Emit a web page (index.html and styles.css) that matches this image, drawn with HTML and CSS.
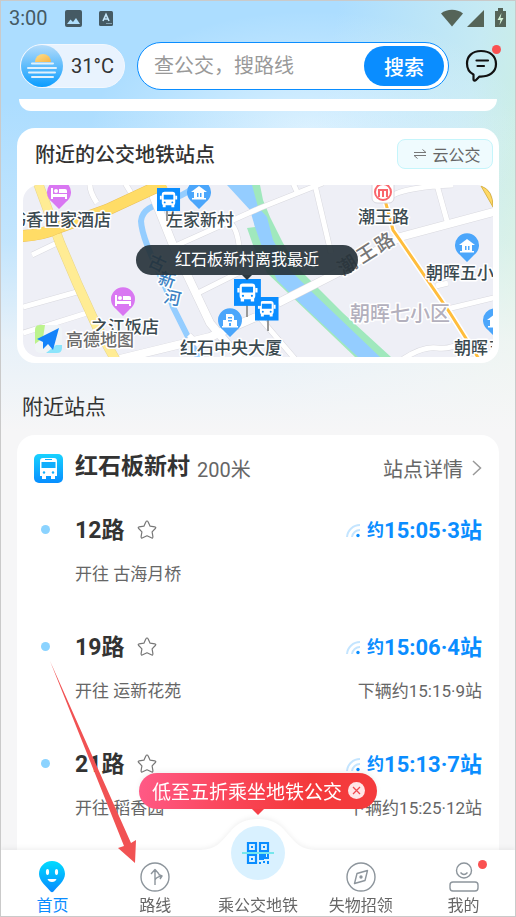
FILE: index.html
```
<!DOCTYPE html>
<html lang="zh-CN">
<head>
    <meta charset="UTF-8">
    <meta name="viewport" content="width=device-width, initial-scale=1.0">
    <title>附近站点</title>
    <link rel="stylesheet" href="styles.css">
</head>
<body>
    <div class="app">
        <div class="status-bar">
            <span class="clock">3:00</span>
            <svg class="status-image" width="17" height="17" viewBox="0 0 17 17"><rect width="17" height="17" rx="2" fill="#455a64"/><path d="M2 14l3.500-4.500 2.500 2.500 3-4 4 6z" fill="#afdefc"/></svg>
            <svg width="14" height="15" viewBox="0 0 14 15"><rect width="14" height="15" rx="1.500" fill="#455a64"/><path d="M4 10L7 3.500 10 10M5 8h4" fill="none" stroke="#c4e6fb" stroke-width="1.600"/><path d="M7.500 12.500h1M9.500 12.500h1M11.500 12.500h1" stroke="#c4e6fb"/></svg>
            <svg class="status-right" width="66" height="20" viewBox="0 0 66 20"><path d="M0 5.500C6 .5 16 .5 22 5.500L11 18.500z" fill="#556458"/><path d="M43 2v17H26z" fill="#556458"/><path d="M54 3h3V0h5v3h3v16H54z" fill="#556458"/><path d="M60.500 5l-4 7h3l-1 5 4-7h-3z" fill="#d3f2d8"/></svg>
        </div>

        <header class="header">
            <div class="weather">
                <svg width="42" height="42" viewBox="0 0 42 42">
                    <defs>
                        <linearGradient id="sky" x1="0" y1="0" x2="0" y2="1"><stop offset="0" stop-color="#b4dcfa"/><stop offset="1" stop-color="#0a9dff"/></linearGradient>
                        <linearGradient id="sun" x1="0" y1="0" x2="1" y2="1"><stop offset="0" stop-color="#ffe08a"/><stop offset="1" stop-color="#f5b54a"/></linearGradient>
                    </defs>
                    <circle cx="21" cy="21" r="21" fill="url(#sky)"/>
                    <path d="M14 17a8 8 0 0 1 16 0z" fill="url(#sun)"/>
                    <path d="M11 18.500h21M7 23h28M8 27.500h26M11 32h21" stroke="#e3f1fb" stroke-width="2" stroke-linecap="round"/>
                </svg>
                <span>31°C</span>
            </div>
            <form class="search">
                <input type="text" aria-label="搜索" placeholder="查公交，搜路线">
                <button type="button">搜索</button>
            </form>
            <button class="message" type="button" aria-label="消息">
                <svg width="34" height="34" viewBox="0 0 34 34"><path d="M16 2C7 2 2 7.500 2 14.500c0 5.500 2.500 9 6.500 11v5c0 1.500 1.500 1.500 2.500.5l3.500-3.500c10 .5 16.500-4.500 16.500-12.500S25 2 16 2z" fill="none" stroke="#111" stroke-width="2.200" stroke-linejoin="round"/><path d="M11.500 11.500h11.500M12.500 17h6.500" stroke="#111" stroke-width="2.200" stroke-linecap="round"/></svg>
                <i class="dot"></i>
            </button>
        </header>

        <main class="content">
            <div class="card card-end"></div>

            <section class="card map-card">
                <div class="map-head">
                    <h2>附近的公交地铁站点</h2>
                    <button class="cloud-btn" type="button">
                        <svg width="14" height="10" viewBox="0 0 14 10"><path d="M1 3.500h12L9.500 .5M13 6.500H1L4.500 9.500" fill="none" stroke="#777"/></svg>
                        云公交
                    </button>
                </div>
                <div class="map">
                    <svg class="map-img" viewBox="0 0 470 172" preserveAspectRatio="xMidYMid slice">
                        <defs>
                            <g id="pin"><path d="M0 16L-7 9A12 12 0 1 1 7 9z"/></g>
                            <g id="house" fill="#fff"><path d="M-8-1L0-7 8-1z"/><path d="M-5-1H5V5H-5z"/><path d="M-7 5H7v1.500H-7z"/><path d="M-2 0h1.500v4H-2zM1 0h1.500v4H1z" fill="#4ba6fb"/></g>
                            <g id="tower" fill="#fff"><path d="M-4-7H2l2 2V5H-4zM-7-1h3v6h-3zM4-1h3v6H4zM-8 5H8v1.500H-8z"/><path d="M-2-4h4v1.500h-4zM-2-1h4V.5h-4zM-1 2H1v3h-2z" fill="#4ba6fb"/></g>
                            <g id="hotel" fill="#fff"><path d="M-8-5h2v6H8V6H6V4H-6v2h-2z"/><circle cx="-3" cy="-2" r="2"/><path d="M0-4h6q2 0 2 2v2H0z"/></g>
                            <g id="bus"><rect width="24" height="24" fill="#0a8dff"/><rect x="5" y="4" width="14" height="14" rx="3" fill="#fff"/><path d="M7 7h10v5H7z" fill="#0a8dff"/><path d="M6 17h3v3H6zM15 17h3v3h-3zM3 8h2v4H3zM19 8h2v4h-2z" fill="#fff"/><circle cx="8" cy="15" r="1" fill="#0a8dff"/><circle cx="16" cy="15" r="1" fill="#0a8dff"/></g>
                        </defs>
                        <rect width="470" height="172" fill="#eeeff6"/>
                        <path d="M225 0H237L240 15 247 32 260 58 277 85 320 128 368 172H332L264 107 244 88 230 60 224 43 232 42z" fill="#a0e8bd"/>
                        <path d="M204 0H229L235 22 244 32 250 55 267 85 290 108 357 172H335L277 118 254 95 239 62 232 42 227 25z" fill="#94cdff"/>
                        <path d="M170 3C150 20 120 16 118 36 119 58 142 96 150 122L176 174" fill="none" stroke="#94cdff" stroke-width="6"/>
                        <!-- streets: grey edge first, white on top -->
                        <g class="street-edge">
                            <path d="M67 -2Q66 6 74 18M102 -2L108 8M270 -2L275 9M292 0L308 68M207 38Q217 45 217 80M414 0L424 36M370 10Q385 2 430 0"/>
                            <path d="M9 70L34 58M0 122L54 107M0 148L64 128M175 108L217 87M380 174Q400 161 414 163T440 156M420 125L474 112M413 101L425 98"/>
                        </g>
                        <g class="street-edge wide">
                            <path d="M126 0L150 60 187 138 217 174M255 118L320 85 377 52 474 26M97 174L187 152 233 132"/>
                        </g>
                        <g class="street-edge">
                            <path d="M150 62L237 23 300 -2M237 133L272 174M166 150L176 160"/>
                        </g>
                        <g class="street">
                            <path d="M67 -2Q66 6 74 18M102 -2L108 8M270 -2L275 9M292 0L308 68M207 38Q217 45 217 80M414 0L424 36M370 10Q385 2 430 0"/>
                            <path d="M9 70L34 58M0 122L54 107M0 148L64 128M175 108L217 87M380 174Q400 161 414 163T440 156M420 125L474 112M413 101L425 98"/>
                            <path d="M150 62L237 23 300 -2M237 133L272 174M166 150L176 160"/>
                        </g>
                        <g class="street wide">
                            <path d="M126 0L150 60 187 138 217 174M255 118L320 85 377 52 474 26M97 174L187 152 233 132"/>
                        </g>
                        <path d="M15 -2L37 58 54 98 74 142 92 174" fill="none" stroke="#e8d58b" stroke-width="10"/>
                        <path d="M15 -2L37 58 54 98 74 142 92 174" fill="none" stroke="#ffec94" stroke-width="9"/>
                        <path d="M-2 51Q20 50 34 43L84 25 142 -2" fill="none" stroke="#eac05b" stroke-width="12"/>
                        <path d="M-2 51Q20 50 34 43L84 25 142 -2" fill="none" stroke="#ffdc66" stroke-width="11"/>
                        <path d="M458 1Q470 5 470 22z" fill="#ffd964" stroke="#d9b44a"/>
                        <path d="M362 15L370 45 377 55 427 128 456 174" fill="none" stroke="#fff" stroke-width="6"/>
                        <path d="M362 15L370 45 377 55 427 128 456 174" fill="none" stroke="#ffbd3c" stroke-width="3"/>

                        <use href="#pin" x="36" y="8" fill="#d977f2"/><use href="#hotel" x="36" y="8"/>
                        <use href="#pin" x="100" y="115" fill="#d977f2"/><use href="#hotel" x="100" y="115"/>
                        <use href="#pin" x="176" y="8" fill="#4ba6fb"/><use href="#house" x="176" y="8"/>
                        <use href="#pin" x="207" y="136" fill="#4ba6fb"/><use href="#tower" x="207" y="136"/>
                        <use href="#pin" x="444" y="61" fill="#4ba6fb"/><use href="#house" x="444" y="61"/>
                        <use href="#pin" x="472" y="136" fill="#4ba6fb"/><use href="#house" x="472" y="136"/>
                        <rect x="349" y="-6" width="22" height="24" rx="5" fill="#fff" stroke="#d8d8e0"/>
                        <circle cx="360" cy="7" r="8" fill="none" stroke="#f9666c" stroke-width="2"/>
                        <path d="M356 12V5h8v7M360 5v7" fill="none" stroke="#f9666c" stroke-width="2"/>

                        <g class="place">
                            <text x="88" y="41" text-anchor="end">书香世家酒店</text>
                            <text x="143" y="41">左家新村</text>
                            <text x="335" y="38">潮王路</text>
                            <text x="403" y="94">朝晖五小</text>
                            <text x="68" y="148">之江饭店</text>
                            <text x="157" y="169">红石中央大厦</text>
                            <text x="431" y="169">朝晖五小</text>
                        </g>
                        <text class="district" x="327" y="136">朝晖七小区</text>
                        <g class="road-name">
                            <text transform="translate(320 91) rotate(-32)">潮</text>
                            <text transform="translate(339 79) rotate(-32)">王</text>
                            <text transform="translate(357 68) rotate(-32)">路</text>
                        </g>
                        <g class="river-name">
                            <text transform="translate(124 80) rotate(25)">古</text>
                            <text transform="translate(134 98) rotate(18)">新</text>
                            <text transform="translate(140 117) rotate(12)">河</text>
                        </g>

                        <path d="M224 118v14M245 134v12M144 26v10" stroke="#999" stroke-width="2"/>
                        <use href="#bus" transform="translate(134 3) scale(.96)"/>
                        <use href="#bus" transform="translate(232 112) scale(.98)"/>
                        <use href="#bus" transform="translate(211 94) scale(1.120)"/>

                        <rect x="12" y="140" width="27" height="28" rx="5" fill="#f0f4f7"/>
                        <path d="M12 145q0-5 5-5h5l-2 13-8 6z" fill="#bcf38d"/>
                        <path d="M23 168l10-8h6v3q0 5-5 5z" fill="#8be4fb"/>
                        <path d="M14 154L36 143 30 165 25 159 20 164 20 157z" fill="#1583fa"/>
                        <text class="map-brand" x="43" y="161">高德地图</text>
                    </svg>
                    <div class="map-tip">红石板新村离我最近</div>
                </div>
            </section>

            <h3 class="section-title">附近站点</h3>

            <section class="card station">
                <div class="station-head">
                    <svg width="29" height="29" viewBox="0 0 29 29">
                        <defs><linearGradient id="cyan" x1="0" y1="0" x2="0" y2="1"><stop offset="0" stop-color="#19d2ff"/><stop offset="1" stop-color="#078eff"/></linearGradient></defs>
                        <rect width="29" height="29" rx="5" fill="url(#cyan)"/>
                        <path d="M9 4h11q3 0 3 3v15H6V7q0-3 3-3zM8 22h4v3H8zM17 22h4v3h-4z" fill="#fff"/>
                        <path d="M7.500 8h14v6h-14zM11 5h7v1h-7z" fill="#12aefc"/>
                        <circle cx="10" cy="18.500" r="1.200" fill="#12aefc"/><circle cx="19" cy="18.500" r="1.200" fill="#12aefc"/>
                    </svg>
                    <h2>红石板新村</h2>
                    <span class="distance">200米</span>
                    <a class="detail" href="#">站点详情
                        <svg width="10" height="16" viewBox="0 0 10 16"><path d="M1 1l7.500 7L1 15" fill="none" stroke="#999" stroke-width="1.500"/></svg>
                    </a>
                </div>

                <ul class="routes">
                    <li class="route">
                        <div class="route-row">
                            <h3>12路</h3>
                            <button class="star" type="button" aria-label="收藏12路"><svg width="20" height="20" viewBox="0 0 20 20"><path d="M10 1q.8 0 1.200 1l1.900 4.200 4.700.6q1.700.4.500 1.700l-3.200 3.300.8 4.800q.1 2-1.600 1.200L10 15.800l-4.300 2q-1.700.8-1.600-1.200l.8-4.800L1.700 8.500Q.5 7.200 2.200 6.800l4.700-.6L8.800 2Q9.200 1 10 1z"/></svg></button>
                            <span class="arrival">
                                <svg width="15" height="15" viewBox="0 0 15 15"><path d="M1 14A13 13 0 0 1 14 2M6 14A8 8 0 0 1 14 7"/><circle cx="12" cy="12.500" r="1.700"/></svg>
                                <small>约</small>15:05·3站
                            </span>
                        </div>
                        <div class="route-sub"><span>开往 古海月桥</span></div>
                    </li>
                    <li class="route">
                        <div class="route-row">
                            <h3>19路</h3>
                            <button class="star" type="button" aria-label="收藏19路"><svg width="20" height="20" viewBox="0 0 20 20"><path d="M10 1q.8 0 1.200 1l1.900 4.200 4.700.6q1.700.4.500 1.700l-3.200 3.300.8 4.800q.1 2-1.600 1.200L10 15.800l-4.300 2q-1.700.8-1.600-1.200l.8-4.800L1.700 8.500Q.5 7.200 2.200 6.800l4.700-.6L8.800 2Q9.200 1 10 1z"/></svg></button>
                            <span class="arrival">
                                <svg width="15" height="15" viewBox="0 0 15 15"><path d="M1 14A13 13 0 0 1 14 2M6 14A8 8 0 0 1 14 7"/><circle cx="12" cy="12.500" r="1.700"/></svg>
                                <small>约</small>15:06·4站
                            </span>
                        </div>
                        <div class="route-sub"><span>开往 运新花苑</span><span>下辆约15:15·9站</span></div>
                    </li>
                    <li class="route">
                        <div class="route-row">
                            <h3>21路</h3>
                            <button class="star" type="button" aria-label="收藏21路"><svg width="20" height="20" viewBox="0 0 20 20"><path d="M10 1q.8 0 1.200 1l1.900 4.200 4.700.6q1.700.4.500 1.700l-3.200 3.300.8 4.800q.1 2-1.600 1.200L10 15.800l-4.300 2q-1.700.8-1.600-1.200l.8-4.800L1.700 8.500Q.5 7.200 2.200 6.800l4.700-.6L8.800 2Q9.200 1 10 1z"/></svg></button>
                            <span class="arrival">
                                <svg width="15" height="15" viewBox="0 0 15 15"><path d="M1 14A13 13 0 0 1 14 2M6 14A8 8 0 0 1 14 7"/><circle cx="12" cy="12.500" r="1.700"/></svg>
                                <small>约</small>15:13·7站
                            </span>
                        </div>
                        <div class="route-sub"><span>开往 稻香园</span><span>下辆约15:25·12站</span></div>
                    </li>
                </ul>
            </section>
        </main>

        <nav class="tabs">
            <svg class="hump" width="120" height="34" viewBox="0 0 120 34"><path d="M0 32C18 32 22 25 32 14 40 4 49 1 60 1S80 4 88 14C98 25 102 32 120 32V34H0z" fill="#fff"/></svg>
            <div class="promo">
                <span>低至五折乘坐地铁公交</span>
                <button type="button" aria-label="关闭"><svg width="17" height="17" viewBox="0 0 17 17"><circle cx="8.500" cy="8.500" r="8.500" fill="#ffe6e8"/><path d="M5 5l7 7M12 5l-7 7" stroke="#f04a50" stroke-width="1.300"/></svg></button>
            </div>
            <a class="tab active" href="#">
                <svg width="30" height="32" viewBox="0 0 30 32">
                    <defs><linearGradient id="home" x1="0" y1="0" x2="0" y2="1"><stop offset="0" stop-color="#00dcff"/><stop offset="1" stop-color="#0789ff"/></linearGradient></defs>
                    <path d="M15 0C7.500 0 2 6 2 13c0 7 8 13 11.500 17.500q1.500 1.500 3 0C20 26 28 20 28 13 28 6 22.500 0 15 0z" fill="url(#home)"/>
                    <ellipse cx="10.500" cy="11" rx="1.600" ry="3" fill="#fff"/><ellipse cx="19.500" cy="11" rx="1.600" ry="3" fill="#fff"/><path d="M10.500 18h9q-1 3-4.500 3t-4.500-3z" fill="#fff"/>
                </svg>
                <span>首页</span>
            </a>
            <a class="tab" href="#">
                <svg width="30" height="32" viewBox="0 0 30 32" class="line"><circle cx="15" cy="16" r="14"/><path d="M15 24V9M11 13l4-4.500 4 4.500M15 19q1-3 7-4M18.500 13.500l3.500 1.500-2 3"/></svg>
                <span>路线</span>
            </a>
            <a class="tab" href="#">
                <span class="scan">
                    <svg width="32" height="22" viewBox="0 0 32 22">
                        <path d="M6 1h8v8H6zM18 1h8v8h-8zM6 13h8v8H6z" fill="none" stroke="#0a8dff" stroke-width="2.200"/>
                        <path d="M9 4h2v2H9zM21 4h2v2h-2zM9 16h2v2H9zM17 12h7v3h-2v3h-5zM25 12h2v5h-5v-2h3zM17 20h2v2h-2zM21 19h2v2h-2zM25 19h2v3h-2z" fill="#0a8dff"/>
                        <path d="M0 11h32" stroke="#54e3e6" stroke-width="1.500"/>
                    </svg>
                </span>
                <span>乘公交地铁</span>
            </a>
            <a class="tab" href="#">
                <svg width="30" height="32" viewBox="0 0 30 32" class="line"><circle cx="15" cy="16" r="14"/><path d="M21.500 9.500L19 19.500 8.500 22.500 11 12.500z"/><circle cx="15" cy="16" r="1" fill="#8d959c"/></svg>
                <span>失物招领</span>
            </a>
            <a class="tab" href="#">
                <svg width="30" height="32" viewBox="0 0 30 32" class="line"><circle cx="15" cy="9.500" r="7.500"/><path d="M11.500 11.500q3.500 4 7 0"/><rect x="1" y="21" width="28" height="9" rx="3"/></svg>
                <i class="dot"></i>
                <span>我的</span>
            </a>
        </nav>

        <svg class="pointer" width="90" height="204" viewBox="0 0 90 204"><path d="M1 1L82 183 87 180 86 203 69 188 75 186z" fill="#f15253"/></svg>
    </div>
</body>
</html>
```
FILE: styles.css
```
* {
    box-sizing: border-box;
}
body {
    margin: 0;
    font-family: Roboto, "Noto Sans CJK SC", sans-serif;
    color: #333;
}
h2, h3, ul {
    margin: 0;
    padding: 0;
}
button {
    padding: 0;
    border: none;
    background: none;
    font-family: inherit;
    cursor: pointer;
}
a {
    color: inherit;
    text-decoration: none;
}
svg {
    display: block;
    flex: none;
}
.app {
    position: relative;
    display: flex;
    flex-direction: column;
    height: 100vh;
    overflow: hidden;
    border: 1px solid #cacaca;
    background:
        linear-gradient(to bottom, rgba(246,246,247,0) 100px, rgba(246,246,247,0.3) 240px, rgba(246,246,247,0.8) 340px, #f6f6f7 430px),
        radial-gradient(ellipse 220px 120px at 60% 130px, rgba(230,246,255,0.8), rgba(230,246,255,0)),
        linear-gradient(100deg, #acddff 50%, #c6eaf3 72%, #d0f2d8 88%);
}
.dot {
    position: absolute;
    width: 9px;
    height: 9px;
    border-radius: 50%;
    background: #fa5151;
}

/* status bar */
.status-bar {
    display: flex;
    align-items: center;
    gap: 17px;
    height: 34px;
    padding: 0 8px;
    color: #455a64;
}
.clock {
    font-size: 20px;
}
.status-right {
    margin-left: auto;
}

/* header */
.header {
    display: flex;
    align-items: center;
    height: 64px;
    padding: 0 16px 2px 19px;
}
.weather {
    display: flex;
    align-items: center;
    gap: 8px;
    height: 44px;
    padding-right: 10px;
    border: 1px solid #f3f8fe;
    border-radius: 22px;
    background: #e9f3fe;
    font-size: 20px;
}
.search {
    display: flex;
    align-items: center;
    flex: 1;
    min-width: 0;
    height: 48px;
    margin: 0 16px 0 12px;
    padding: 0 4px 0 16px;
    border: 1px solid #0a8dff;
    border-radius: 24px;
    background: #fff;
}
.search input {
    flex: 1;
    min-width: 0;
    padding: 0;
    border: none;
    outline: none;
    background: none;
    font-family: inherit;
    font-size: 20px;
}
.search input::placeholder {
    color: #999;
}
.search button {
    width: 80px;
    height: 40px;
    border-radius: 20px;
    background: #0a8dff;
    color: #fff;
    font-size: 20px;
    font-weight: 500;
}
.message {
    position: relative;
}
.message .dot {
    top: -4px;
    right: -2px;
}

/* content */
.content {
    flex: 1;
    min-height: 0;
    overflow: hidden;
    padding: 0 16px;
}
.card {
    border-radius: 18px;
    background: #fff;
}
.card-end {
    height: 12px;
    margin: 0 2px 17px;
    border-radius: 0 0 18px 18px;
}
.map-card {
    padding: 6px;
}
.map-head {
    display: flex;
    align-items: center;
    justify-content: space-between;
    height: 51px;
    padding: 0 0 12px 12px;
}
.map-head h2 {
    font-size: 20px;
    font-weight: 500;
}
.cloud-btn {
    display: flex;
    align-items: center;
    justify-content: center;
    gap: 5px;
    width: 96px;
    height: 30px;
    padding-left: 4px;
    border: 1px solid #c5f5fb;
    border-radius: 8px;
    background: #effbfe;
    color: #666;
    font-size: 16px;
}
.map {
    position: relative;
    overflow: hidden;
    border-radius: 16px;
}
.map-img {
    width: 100%;
    height: 172px;
}
.map-img text {
    stroke: #fff;
    stroke-width: 3px;
    stroke-linejoin: round;
    paint-order: stroke;
}
.street, .street-edge {
    fill: none;
    stroke: #fff;
    stroke-width: 5px;
    stroke-linejoin: round;
}
.street-edge {
    stroke: #d9d9df;
    stroke-width: 6px;
}
.wide {
    stroke-width: 8px;
}
.street-edge.wide {
    stroke-width: 9px;
}
.place {
    font-size: 17px;
    fill: #3b4a50;
    font-weight: 500;
}
.district {
    font-size: 20px;
    fill: #b3b0bd;
    font-weight: 500;
}
.road-name {
    font-size: 19px;
    font-weight: 500;
    fill: #777;
}
.river-name {
    font-size: 17px;
    font-weight: 500;
    fill: #3d83c4;
}
.map-brand {
    font-size: 17px;
    font-weight: 500;
    fill: #6b6b6b;
}
.map-tip {
    position: absolute;
    top: 60px;
    left: 50%;
    width: 222px;
    margin-left: -122px;
    border-radius: 15px;
    background: rgba(36,48,56,0.91);
    color: #fff;
    font-size: 16px;
    line-height: 30px;
    text-align: center;
}
.map-tip::after {
    content: "";
    position: absolute;
    top: 100%;
    left: 50%;
    margin-left: -5px;
    border: 5px solid transparent;
    border-top-color: #2c383f;
    border-bottom: none;
}
.section-title {
    padding-left: 5px;
    font-size: 21px;
    font-weight: 400;
    line-height: 32px;
    margin: 28px 0 12px;
}

/* station card */
.station {
    padding: 12px 17px 40px;
}
.station-head {
    display: flex;
    align-items: center;
    height: 42px;
}
.station-head h2 {
    margin: 0 7px 0 12px;
    font-size: 23px;
    font-weight: 700;
    line-height: 32px;
    padding-bottom: 2px;
}
.distance, .detail {
    color: #666;
    font-size: 20px;
}
.detail {
    display: flex;
    align-items: center;
    gap: 9px;
    margin-left: auto;
}
.routes {
    list-style: none;
}
.route {
    position: relative;
    height: 117px;
    padding: 22px 0 0 41px;
}
.route::before {
    content: "";
    position: absolute;
    top: 36px;
    left: 7px;
    width: 9px;
    height: 9px;
    border-radius: 50%;
    background: #8bd3ff;
}
.route-row {
    display: flex;
    align-items: center;
    height: 34px;
}
.route h3 {
    font-size: 23px;
    font-weight: 700;
}
.star {
    margin: 4px 0 0 13px;
}
.star path {
    fill: none;
    stroke: #777;
    stroke-width: 1.2px;
    stroke-linejoin: round;
}
.arrival {
    display: flex;
    align-items: center;
    margin-left: auto;
    color: #0a8dff;
    font-size: 22px;
    font-weight: 700;
}
.arrival small {
    font-size: 17px;
    font-weight: 700;
}
.arrival svg {
    margin: 4px 6px 0 0;
}
.arrival path {
    fill: none;
    stroke: #c4e5ff;
    stroke-width: 2px;
}
.arrival circle {
    fill: #0a8dff;
}
.route-sub {
    display: flex;
    justify-content: space-between;
    margin-top: 16px;
    color: #666;
    font-size: 17px;
    line-height: 26px;
}

/* bottom tabs */
.tabs {
    position: relative;
    display: flex;
    height: 66px;
    background: #fff;
    filter: drop-shadow(0 -2px 2px rgba(0,0,0,0.05));
}
.hump {
    position: absolute;
    top: -32px;
    left: 50%;
    margin-left: -60px;
}
.tab {
    position: relative;
    display: flex;
    flex: 1;
    flex-direction: column;
    align-items: center;
    justify-content: flex-end;
    gap: 3px;
    color: #666;
    font-size: 16px;
    line-height: 20px;
    white-space: nowrap;
}
.tab.active {
    color: #0a8dff;
}
.tab .dot {
    top: 10px;
    left: 50%;
    margin-left: 14px;
}
.line {
    fill: none;
    stroke: #8d959c;
    stroke-width: 1.4px;
    stroke-linejoin: round;
}
.scan {
    display: flex;
    align-items: center;
    justify-content: center;
    flex: none;
    width: 54px;
    height: 54px;
    margin-bottom: 13px;
    border-radius: 50%;
    background: #d9f1ff;
}
.promo {
    position: absolute;
    bottom: 107px;
    left: 50%;
    display: flex;
    align-items: center;
    justify-content: space-between;
    width: 238px;
    height: 36px;
    margin-left: -119px;
    padding: 0 12px 2px 13px;
    border-radius: 18px;
    background: linear-gradient(100deg, #ff5a87, #fa4558 40%, #f43a3c 70%);
    color: #fff;
    font-size: 19px;
    white-space: nowrap;
}
.promo::after {
    content: "";
    position: absolute;
    top: 100%;
    left: 50%;
    margin-left: -6px;
    border: 6px solid transparent;
    border-top-color: #f63f48;
    border-bottom: none;
}
.pointer {
    position: absolute;
    bottom: 52px;
    left: 48px;
    pointer-events: none;
}
```
